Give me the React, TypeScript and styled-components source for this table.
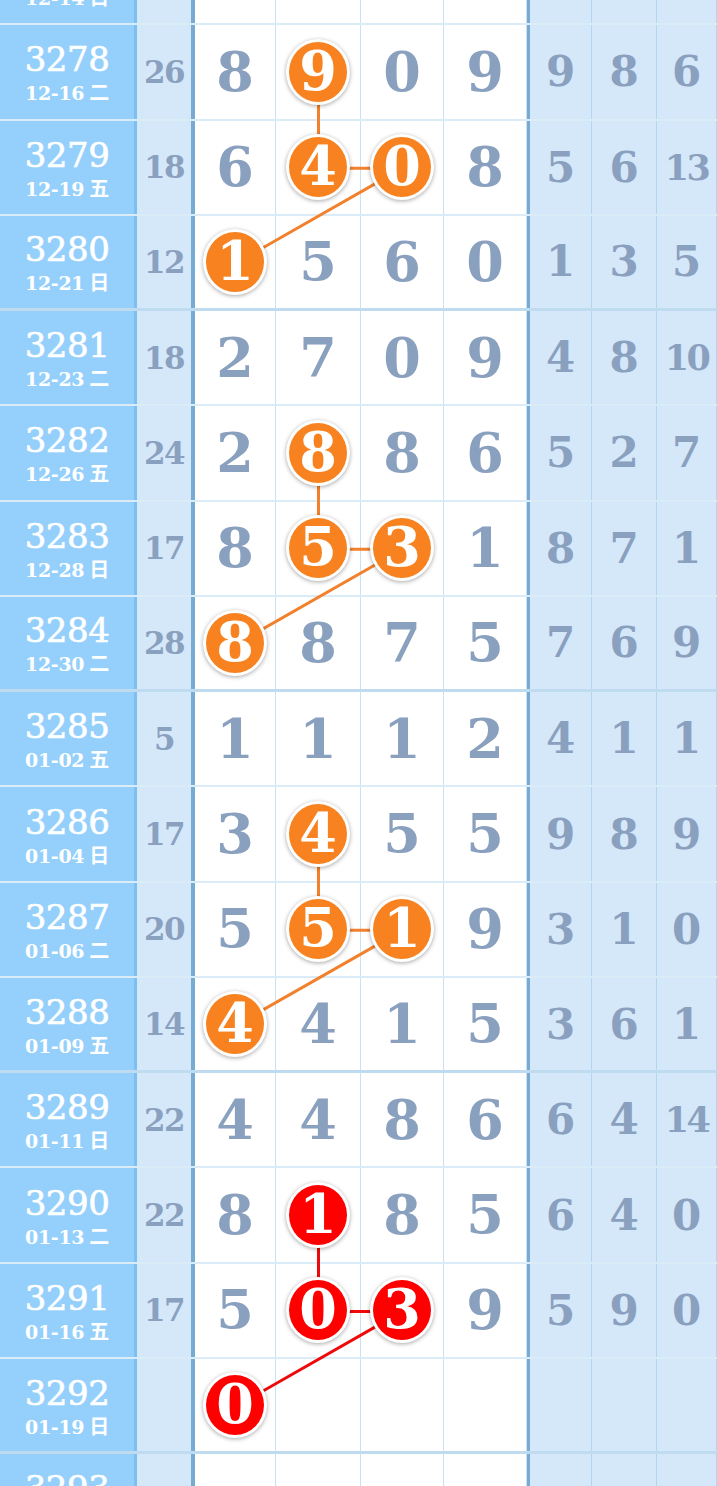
import React from 'react';
import styled, { createGlobalStyle } from 'styled-components';

const ROW_H = 95.27;
const COLS = [137, 54, 85, 85, 83, 83, 65, 65, 60];
const DIGIT_X = [235.5, 318.5, 402.5, 485.5];
const SERIF = '"DejaVu Serif", "Liberation Serif", serif';
const CJK = '"Noto Sans CJK SC", "Noto Sans", sans-serif';

const ORANGE = '#f7821f';
const RED = '#ff0000';

const GlobalStyle = createGlobalStyle`
    html, body {
        margin: 0;
        padding: 0;
        overflow: hidden;
        background: #ffffff;
    }
    body {
        font-family: ${SERIF};
    }
`;

type Draw = {
    no: number;
    date: string;
    day: string;
    sum?: number;
    digits: (number | null)[];
    balls?: number[];
    tail: (number | null)[];
    hot?: boolean;
};

const draws: Draw[] = [
    { no: 3277, date: '12-14', day: '日', sum: 20, digits: [3, 7, 2, 8], tail: [1, 5, 2] },
    { no: 3278, date: '12-16', day: '二', sum: 26, digits: [8, 9, 0, 9], balls: [1], tail: [9, 8, 6] },
    { no: 3279, date: '12-19', day: '五', sum: 18, digits: [6, 4, 0, 8], balls: [1, 2], tail: [5, 6, 13] },
    { no: 3280, date: '12-21', day: '日', sum: 12, digits: [1, 5, 6, 0], balls: [0], tail: [1, 3, 5] },
    { no: 3281, date: '12-23', day: '二', sum: 18, digits: [2, 7, 0, 9], tail: [4, 8, 10] },
    { no: 3282, date: '12-26', day: '五', sum: 24, digits: [2, 8, 8, 6], balls: [1], tail: [5, 2, 7] },
    { no: 3283, date: '12-28', day: '日', sum: 17, digits: [8, 5, 3, 1], balls: [1, 2], tail: [8, 7, 1] },
    { no: 3284, date: '12-30', day: '二', sum: 28, digits: [8, 8, 7, 5], balls: [0], tail: [7, 6, 9] },
    { no: 3285, date: '01-02', day: '五', sum: 5, digits: [1, 1, 1, 2], tail: [4, 1, 1] },
    { no: 3286, date: '01-04', day: '日', sum: 17, digits: [3, 4, 5, 5], balls: [1], tail: [9, 8, 9] },
    { no: 3287, date: '01-06', day: '二', sum: 20, digits: [5, 5, 1, 9], balls: [1, 2], tail: [3, 1, 0] },
    { no: 3288, date: '01-09', day: '五', sum: 14, digits: [4, 4, 1, 5], balls: [0], tail: [3, 6, 1] },
    { no: 3289, date: '01-11', day: '日', sum: 22, digits: [4, 4, 8, 6], tail: [6, 4, 14] },
    { no: 3290, date: '01-13', day: '二', sum: 22, digits: [8, 1, 8, 5], balls: [1], tail: [6, 4, 0], hot: true },
    { no: 3291, date: '01-16', day: '五', sum: 17, digits: [5, 0, 3, 9], balls: [1, 2], tail: [5, 9, 0], hot: true },
    { no: 3292, date: '01-19', day: '日', digits: [0, null, null, null], balls: [0], tail: [null, null, null], hot: true },
    { no: 3293, date: '01-21', day: '二', digits: [null, null, null, null], tail: [null, null, null] },
];

// each shape starts on the row holding the single upper ball
const shapes = [
    { start: 1, color: '#f2802c' },
    { start: 5, color: '#f2802c' },
    { start: 9, color: '#f2802c' },
    { start: 13, color: '#ee0a0a' },
];

const Page = styled.div`
    margin-top: -70px;
    width: 717px;
`;

const Board = styled.div`
    position: relative;
    width: 717px;
`;

const Row = styled.div<{ $groupEnd: boolean }>`
    display: grid;
    grid-template-columns: ${COLS.map(c => `${c}px`).join(' ')};
    height: ${ROW_H}px;
    box-sizing: border-box;
    border-bottom: ${props => (props.$groupEnd ? '3px' : '2px')} solid
        ${props => (props.$groupEnd ? 'rgba(100, 170, 220, 0.42)' : 'rgba(120, 185, 225, 0.28)')};
`;

const Cell = styled.div`
    display: flex;
    align-items: center;
    justify-content: center;
    box-sizing: border-box;
    min-width: 0;
`;

const PeriodCell = styled(Cell)`
    flex-direction: column;
    background: #94d0fb;
    border-right: 3px solid rgba(80, 160, 220, 0.35);
    color: #ffffff;
    padding-top: 2px;
`;

const PeriodNo = styled.div`
    font-family: ${SERIF};
    font-size: 34px;
    line-height: 36px;
    letter-spacing: -0.5px;
    -webkit-text-stroke: 0.6px #ffffff;
`;

const PeriodDate = styled.div`
    font-family: ${SERIF};
    font-size: 19px;
    font-weight: bold;
    line-height: 22px;
    margin-top: 4px;
    letter-spacing: -0.3px;
    span {
        font-family: ${CJK};
        font-size: 20px;
        margin-left: 5px;
    }
`;

const SumCell = styled(Cell)`
    background: #d5e8f9;
    color: #8aa0bf;
    font-family: ${SERIF};
    font-weight: bold;
    font-size: 31px;
    letter-spacing: -1.5px;
`;

const DigitCell = styled(Cell)<{ $first: boolean }>`
    background: #ffffff;
    border-left: ${props => (props.$first ? '4px solid #76acd3' : 'none')};
    border-right: 1px solid rgba(100, 170, 220, 0.35);
    color: #8aa0bf;
    font-family: ${SERIF};
    font-weight: bold;
    font-size: 54px;
`;

const TailCell = styled(Cell)<{ $first: boolean; $wide: boolean }>`
    background: #d5e8f9;
    border-left: ${props => (props.$first ? '3px solid #76acd3' : 'none')};
    border-right: 1px solid rgba(100, 170, 220, 0.3);
    color: #8aa0bf;
    font-family: ${SERIF};
    font-weight: bold;
    font-size: ${props => (props.$wide ? '35px' : '42px')};
    letter-spacing: ${props => (props.$wide ? '-2.5px' : '0')};
`;

const Ball = styled.div<{ $color: string }>`
    position: relative;
    z-index: 2;
    width: 58px;
    height: 58px;
    border: 3px solid #ffffff;
    border-radius: 50%;
    background: ${props => props.$color};
    box-shadow: 0 1px 4px rgba(0, 0, 0, 0.35);
    display: flex;
    align-items: center;
    justify-content: center;
    color: #ffffff;
    font-size: 54px;
    line-height: 1;
    padding-bottom: 2px;
    box-sizing: content-box;
`;

const Links = styled.svg`
    position: absolute;
    top: 0;
    left: 0;
    z-index: 1;
    pointer-events: none;
`;

const rowY = (r: number) => r * ROW_H + ROW_H / 2;

const App = () => {
    const height = draws.length * ROW_H;
    return (
        <Page>
            <GlobalStyle />
            <Board>
                {draws.map((d, i) => (
                    <Row key={d.no} $groupEnd={i % 4 === 3}>
                        <PeriodCell>
                            <PeriodNo>{d.no}</PeriodNo>
                            <PeriodDate>
                                {d.date}
                                <span>{d.day}</span>
                            </PeriodDate>
                        </PeriodCell>
                        <SumCell>{d.sum ?? ''}</SumCell>
                        {d.digits.map((v, j) => (
                            <DigitCell key={j} $first={j === 0}>
                                {d.balls?.includes(j) ? (
                                    <Ball $color={d.hot ? RED : ORANGE}>{v}</Ball>
                                ) : (
                                    v ?? ''
                                )}
                            </DigitCell>
                        ))}
                        {d.tail.map((v, j) => (
                            <TailCell key={j} $first={j === 0} $wide={(v ?? 0) > 9}>
                                {v ?? ''}
                            </TailCell>
                        ))}
                    </Row>
                ))}
                <Links width={717} height={height} viewBox={`0 0 717 ${height}`}>
                    {shapes.map(s => (
                        <g key={s.start} stroke={s.color} strokeWidth={3} fill="none">
                            <line x1={DIGIT_X[1]} y1={rowY(s.start)} x2={DIGIT_X[1]} y2={rowY(s.start + 1)} />
                            <line x1={DIGIT_X[1]} y1={rowY(s.start + 1)} x2={DIGIT_X[2]} y2={rowY(s.start + 1)} />
                            <line x1={DIGIT_X[2]} y1={rowY(s.start + 1)} x2={DIGIT_X[0]} y2={rowY(s.start + 2)} />
                        </g>
                    ))}
                </Links>
            </Board>
        </Page>
    );
};

export default App;
